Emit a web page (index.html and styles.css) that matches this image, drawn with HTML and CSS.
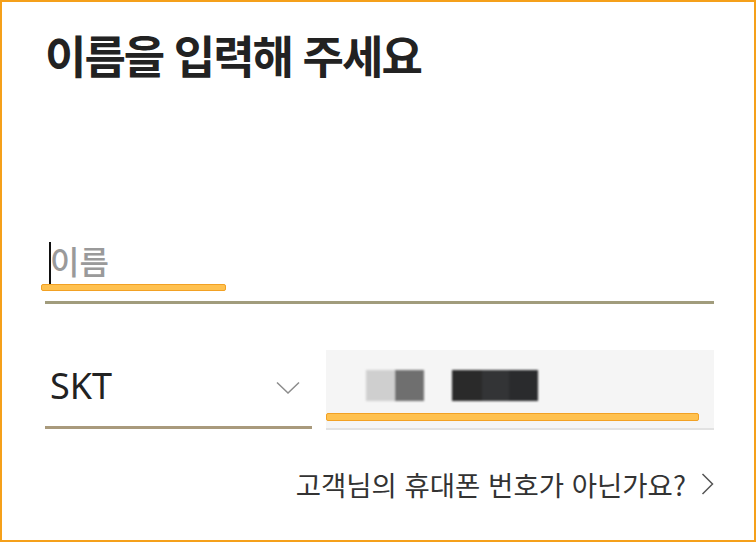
FILE: index.html
```html
<!DOCTYPE html>
<html lang="ko">
<head>
  <meta charset="UTF-8">
  <meta name="viewport" content="width=device-width, initial-scale=1.0">
  <title>이름 입력</title>
  <link rel="stylesheet" href="styles.css">
</head>
<body>

  <div class="frame">
    <h1 class="title">이름을 입력해 주세요</h1>

    <div class="name-field">
      <span class="caret"></span>
      <span class="placeholder">이름</span>
      <span class="mark mark-name"></span>
    </div>

    <div class="phone-row">
      <div class="carrier">
        <span class="carrier-name">SKT</span>
        <svg class="chevron-down" width="24" height="14" viewBox="0 0 24 14">
          <polyline points="1,1.5 12,12 23,1.5" fill="none" stroke="#8c8c8c" stroke-width="1.5"/>
        </svg>
      </div>
      <div class="number">
        <span class="blur blur-light"></span>
        <span class="blur blur-mid"></span>
        <span class="blur blur-dark"></span>
        <span class="mark mark-number"></span>
      </div>
    </div>

    <div class="other-link">
      <span>고객님의 휴대폰 번호가 아닌가요?</span>
      <svg class="chevron-right" width="13" height="22" viewBox="0 0 13 22">
        <polyline points="1.5,1 11.5,11 1.5,21" fill="none" stroke="#555" stroke-width="1.5"/>
      </svg>
    </div>
  </div>

</body>
</html>
```

FILE: styles.css
```css
body {
  margin: 0;
  background-color: #fff;
  font-family: "Noto Sans CJK KR", "Noto Sans", sans-serif;
}

.frame {
  width: 756px;
  height: 542px;
  box-sizing: border-box;
  border: 2px solid #f5a01a;
  padding: 0 40px 0 43px;
  overflow: hidden;
}

.title {
  margin: 27px 0 0 0;
  font-size: 45px;
  line-height: 52px;
  font-weight: 700;
  letter-spacing: -2px;
  color: #222;
}

.name-field {
  position: relative;
  margin-top: 159px;
  padding-bottom: 21px;
  border-bottom: 3px solid #a19c7c;
  font-size: 32px;
  line-height: 40px;
  height: 40px;
}

.placeholder {
  padding-left: 5px;
  font-weight: 500;
  color: #9a9a9a;
}

.caret {
  position: absolute;
  left: 4px;
  top: 2px;
  width: 2px;
  height: 42px;
  background-color: #111;
}

.mark {
  position: absolute;
  box-sizing: border-box;
  background-color: #ffc14f;
  border: 1px solid #f2a124;
  border-radius: 2px;
}

.mark-name {
  left: -4px;
  top: 44px;
  width: 185px;
  height: 7px;
}

.phone-row {
  display: flex;
  gap: 14px;
  margin-top: 46px;
}

.carrier {
  width: 267px;
  height: 79px;
  box-sizing: border-box;
  border-bottom: 3px solid #a99a7c;
  display: flex;
  align-items: center;
  justify-content: space-between;
  padding: 0 12px 0 0;
}

.carrier-name {
  padding: 0 0 4px 5px;
  font-family: "Noto Sans", sans-serif;
  font-size: 36px;
  line-height: 1;
  color: #222;
}

.number {
  position: relative;
  flex: 1;
  height: 80px;
  box-sizing: border-box;
  padding: 20px 0 0 40px;
  background-color: #f5f5f5;
  border-bottom: 2px solid #e2e2e2;
  display: flex;
  align-items: flex-start;
}

.blur {
  height: 31px;
  filter: blur(0.8px);
}

.blur-light {
  width: 29px;
  background-color: #cfcfcf;
}

.blur-mid {
  width: 29px;
  background-color: #6f6f6f;
}

.blur-dark {
  width: 86px;
  margin-left: 28px;
  background: linear-gradient(to right, #2a2a2a 35%, #333436 35%, #333436 66%, #2a2b2d 66%);
}

.mark-number {
  left: 0;
  top: 63px;
  width: 373px;
  height: 8px;
}

.other-link {
  display: flex;
  justify-content: flex-end;
  align-items: center;
  gap: 15px;
  margin-top: 36px;
  font-size: 27.5px;
  line-height: 36px;
  color: #333;
}
```
